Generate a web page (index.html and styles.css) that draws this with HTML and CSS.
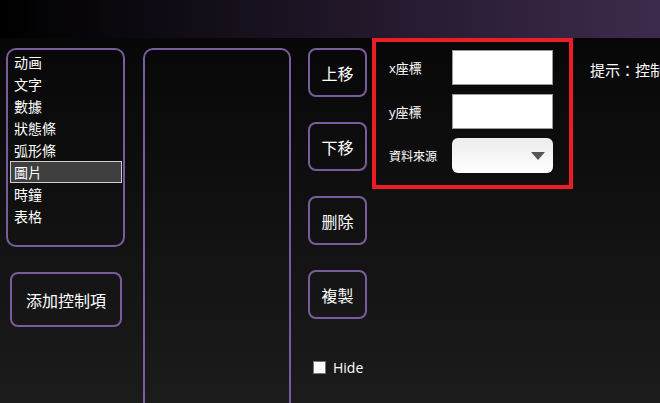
FILE: index.html
```html
<!DOCTYPE html>
<html lang="zh-Hant">

<head>
    <meta charset="UTF-8">
    <title>控制項編輯</title>
    <link rel="stylesheet" href="styles.css">
</head>

<body>
    <div class="topbar"></div>
    <div class="main">
        <div class="col-left">
            <ul class="type-list">
                <li>动画</li>
                <li>文字</li>
                <li>數據</li>
                <li>狀態條</li>
                <li>弧形條</li>
                <li class="selected">圖片</li>
                <li>時鐘</li>
                <li>表格</li>
            </ul>
            <button class="btn add-btn">添加控制項</button>
        </div>
        <div class="control-list"></div>
        <div class="col-btns">
            <button class="btn small-btn">上移</button>
            <button class="btn small-btn">下移</button>
            <button class="btn small-btn">删除</button>
            <button class="btn small-btn">複製</button>
            <label class="hide-check"><span class="box"></span>Hide</label>
        </div>
        <div class="props">
            <div class="prop-row">
                <span class="prop-label">x座標</span>
                <input class="prop-input" type="text">
            </div>
            <div class="prop-row">
                <span class="prop-label">y座標</span>
                <input class="prop-input" type="text">
            </div>
            <div class="prop-row">
                <span class="prop-label small">資料來源</span>
                <div class="prop-select"><span class="arrow"></span></div>
            </div>
        </div>
        <div class="hint">提示：控制項屬性修改後即時生效</div>
    </div>
</body>

</html>
```

FILE: styles.css
```css
body {
    margin: 0;
    height: 403px;
    overflow: hidden;
    background: linear-gradient(#050505, #1b1b1b);
    color: #ffffff;
    font-family: "Open Sans", "Noto Sans CJK TC", sans-serif;
}

.topbar {
    height: 38px;
    background: linear-gradient(to right, #000000, #3d2b4d);
}

.main {
    display: flex;
    align-items: flex-start;
    height: 365px;
    overflow: hidden;
    padding-left: 6px;
    white-space: nowrap;
}

.col-left {
    display: flex;
    flex-direction: column;
    width: 119px;
    margin-top: 10px;
    flex-shrink: 0;
}

.type-list {
    box-sizing: border-box;
    height: 199px;
    margin: 0;
    padding: 1px 1px 0 2px;
    list-style: none;
    border: 2px solid #7a5c9c;
    border-radius: 10px;
    font-family: "Noto Sans CJK TC", sans-serif;
    font-size: 14px;
}

.type-list li {
    line-height: 20px;
    padding-left: 3px;
    border: 1px solid transparent;
}

.type-list li.selected {
    background: #3f3f3f;
    border-color: #cfcfcf;
}

.btn {
    box-sizing: border-box;
    background: transparent;
    color: #ffffff;
    border: 2px solid #7a5c9c;
    border-radius: 8px;
    font-family: "Noto Sans CJK TC", sans-serif;
    font-size: 16px;
    padding: 0;
}

.add-btn {
    width: 112px;
    height: 55px;
    margin: 25px 0 0 4px;
}

.control-list {
    box-sizing: border-box;
    width: 148px;
    height: 380px;
    margin: 10px 0 0 18px;
    border: 2px solid #7a5c9c;
    border-radius: 10px;
    flex-shrink: 0;
}

.col-btns {
    display: flex;
    flex-direction: column;
    gap: 25px;
    margin: 10px 0 0 17px;
    flex-shrink: 0;
}

.small-btn {
    width: 59px;
    height: 49px;
}

.hide-check {
    display: flex;
    align-items: center;
    gap: 7px;
    margin: 14px 0 0 5px;
    font-size: 14px;
}

.hide-check .box {
    width: 11px;
    height: 11px;
    background: #ffffff;
    border: 1px solid #767676;
}

.props {
    box-sizing: border-box;
    width: 201px;
    height: 151px;
    margin-left: 5px;
    padding: 8px 0 0 13px;
    border: 4px solid #ed1c24;
    display: flex;
    flex-direction: column;
    gap: 9px;
    flex-shrink: 0;
}

.prop-row {
    display: flex;
    align-items: center;
    justify-content: space-between;
    padding-right: 16px;
    height: 35px;
}

.prop-label {
    font-family: "Open Sans", "Noto Sans CJK TC", sans-serif;
    font-size: 13px;
}

.prop-label.small {
    font-size: 12px;
}

.prop-input {
    box-sizing: border-box;
    width: 101px;
    height: 35px;
    margin: 0;
    border: 1px solid #9a9a9a;
    background: #ffffff;
}

.prop-select {
    position: relative;
    width: 101px;
    height: 35px;
    border-radius: 6px;
    background: linear-gradient(#ececec, #ffffff);
}

.prop-select .arrow {
    position: absolute;
    right: 8px;
    top: 14px;
    width: 0;
    height: 0;
    border-left: 7px solid transparent;
    border-right: 7px solid transparent;
    border-top: 8px solid #555555;
}

.hint {
    flex: 1;
    min-width: 0;
    overflow: hidden;
    margin: 21px 0 0 17px;
    font-family: "Noto Sans CJK TC", sans-serif;
    font-size: 15px;
}
```
